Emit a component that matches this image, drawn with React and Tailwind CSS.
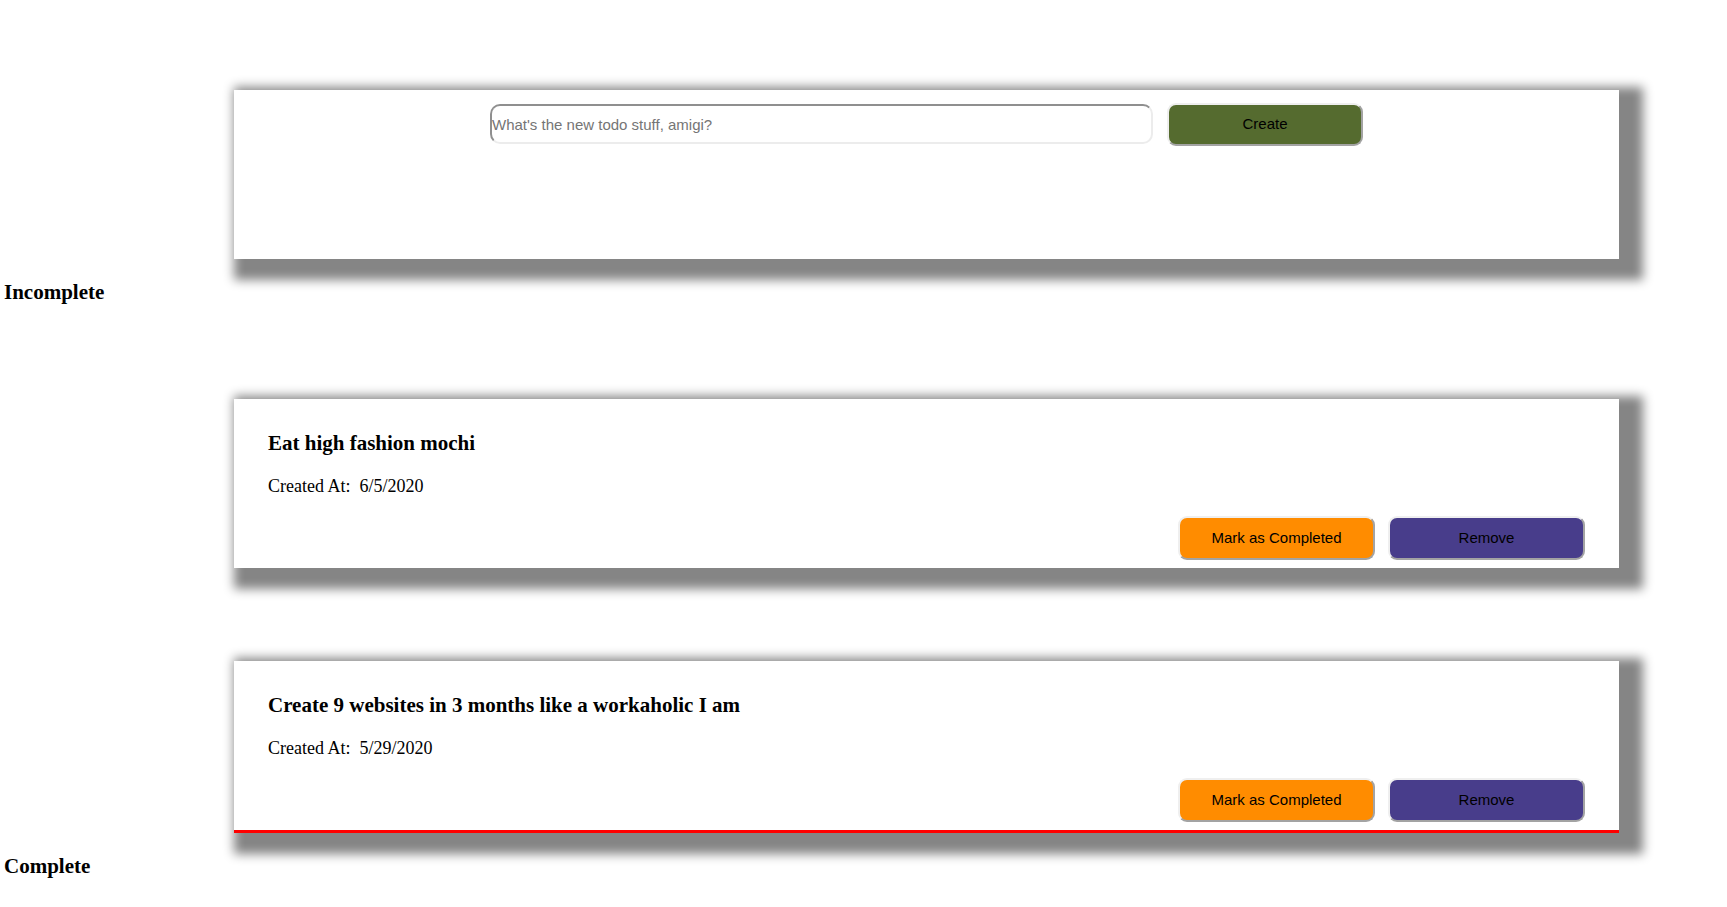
import React from 'react'

const todos = [
  { id: 1, title: 'Eat high fashion mochi', createdAt: '6/5/2020', late: false },
  { id: 2, title: 'Create 9 websites in 3 months like a workaholic I am', createdAt: '5/29/2020', late: true },
]

function Card({ children, className = '' }) {
  return (
    <div
      className={`ml-[234px] w-[1385px] h-[169px] bg-white shadow-[12px_9px_10px_12px_#858585] ${className}`}>
      {children}
    </div>
  )
}

function ActionButton({ children, color }) {
  return (
    <button
      className={`w-[197px] h-[44px] rounded-[9px] border-2 border-t-[#efefef] border-l-[#efefef] border-b-[#a3a3a3] border-r-[#a3a3a3] text-[15px] text-black font-['Liberation_Sans',Arial,sans-serif] ${color}`}>
      {children}
    </button>
  )
}

function TodoCard({ todo }) {
  return (
    <div
      className={`ml-[234px] w-[1385px] bg-white shadow-[12px_9px_10px_12px_#858585] flex flex-col pl-[34px] pr-[34px] pt-[32px] pb-[7px] ${
        todo.late ? 'border-b-[3px] border-[#ff0000] h-[172px]' : 'h-[169px]'
      }`}>
      <h3 className="text-[21px] leading-[24px] font-bold">{todo.title}</h3>
      <p className="mt-[21px] text-[18px] leading-[21px] whitespace-pre">
        {'Created At:  ' + todo.createdAt}
      </p>
      <div className="mt-[19px] flex justify-end gap-[13px]">
        <ActionButton color="bg-[#ff8c00]">Mark as Completed</ActionButton>
        <ActionButton color="bg-[#483d8b]">Remove</ActionButton>
      </div>
    </div>
  )
}

export default function App() {
  const [text, setText] = React.useState('')

  return (
    <div className="min-h-[907px] bg-white text-black font-['Liberation_Serif','Times_New_Roman',serif] pt-[90px]">
      {/* New todo form */}
      <Card className="pt-[13px]">
        <div className="flex justify-center items-start gap-[14px]">
          <input
            value={text}
            onChange={(e) => setText(e.target.value)}
            placeholder="What's the new todo stuff, amigi?"
            className="mt-[1px] w-[663px] h-[40px] rounded-[10px] border-2 border-t-[#8f8f8f] border-l-[#8f8f8f] border-b-[#ececec] border-r-[#ececec] bg-white px-0 text-[15px] font-['Liberation_Sans',Arial,sans-serif] placeholder:text-[#757575] outline-none"
          />
          <button className="w-[196px] h-[43px] rounded-[9px] border-2 border-t-[#efefef] border-l-[#efefef] border-b-[#a3a3a3] border-r-[#a3a3a3] bg-[#556b2f] text-[15px] text-black font-['Liberation_Sans',Arial,sans-serif]">
            Create
          </button>
        </div>
      </Card>

      <h3 className="mt-[21px] pl-[4px] text-[21px] leading-[24px] font-bold">Incomplete</h3>

      <div className="mt-[95px] flex flex-col gap-[93px]">
        {todos.map((t) => (
          <TodoCard key={t.id} todo={t} />
        ))}
      </div>

      <h3 className="mt-[21px] pl-[4px] text-[21px] leading-[24px] font-bold">Complete</h3>
    </div>
  )
}
